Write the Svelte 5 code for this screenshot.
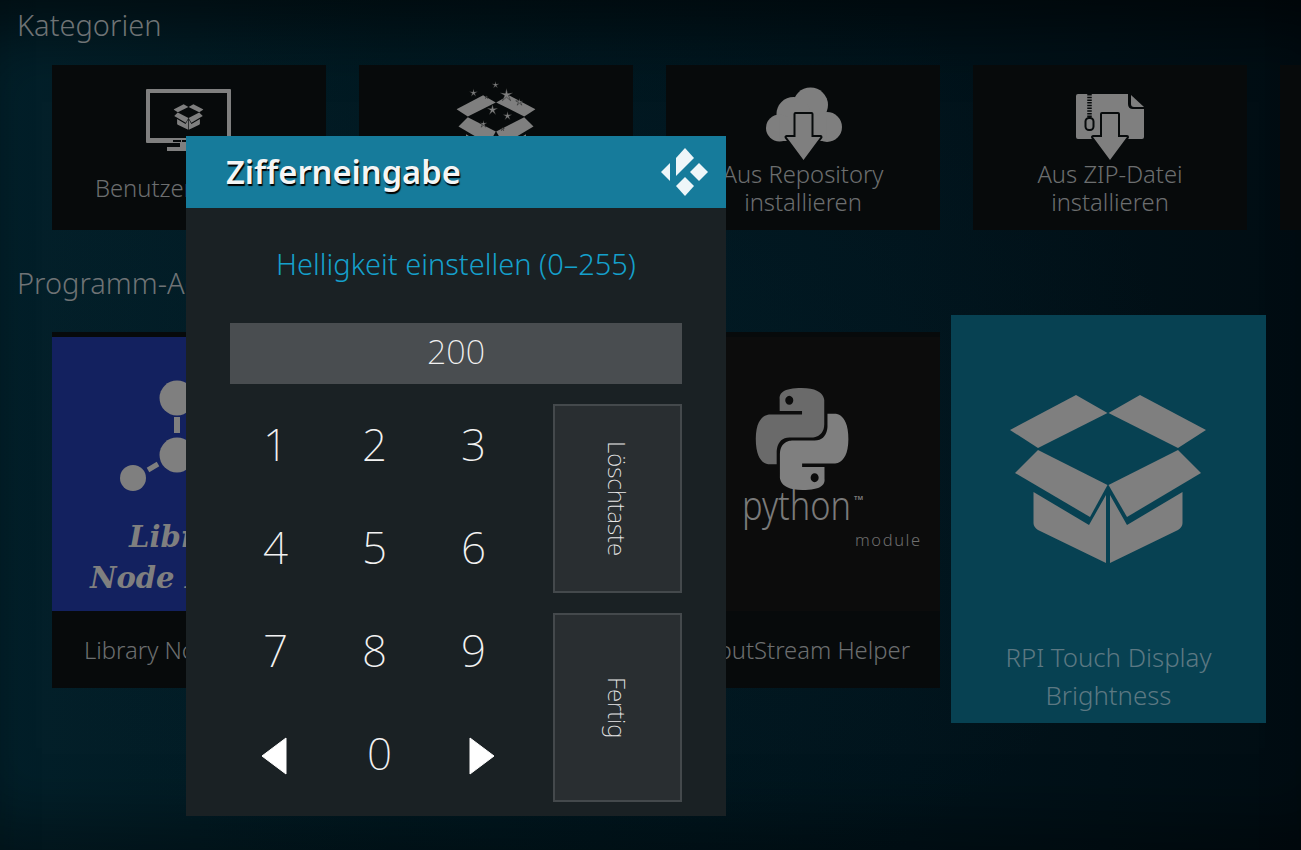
<script lang="ts">
  const keys = ["1", "2", "3", "4", "5", "6", "7", "8", "9"];
  const stars = [
    [27.5, -3, 4.5], [49.5, -11, 4], [60.5, -1, 7], [73.5, 6, 4], [40.5, 1, 1.8],
    [46.5, 14, 6], [61.5, 20, 5], [37.5, 28, 4], [56.5, 33, 2],
  ];
  const starPoints = (cx: number, cy: number, r: number) => {
    const pts = [];
    for (let i = 0; i < 10; i++) {
      const a = (Math.PI / 5) * i - Math.PI / 2;
      const d = i % 2 ? r * 0.3 : r;
      pts.push(`${(cx + d * Math.cos(a)).toFixed(1)},${(cy + d * Math.sin(a)).toFixed(1)}`);
    }
    return pts.join(" ");
  };
</script>

<svg class="defs" aria-hidden="true">
  <symbol id="box" viewBox="0 0 196 168">
    <path d="M66 0 97.5 18 28 53 0 35Z" />
    <path d="M130 0 196 35 168 53 98.5 18Z" />
    <path d="M28 55 97.5 90 80 122 5 78Z" />
    <path d="M168 55 191 78 117 122 98.5 90Z" />
    <path d="M23.5 97 79 130 96 100V168L28 135Q23.5 132 23.5 128Z" />
    <path d="M172.5 97 117 130 100 100V168L168 135Q172.5 132 172.5 128Z" />
  </symbol>
  <symbol id="arrow" viewBox="0 0 100 76">
    <path d="M42.5 27H58.5V50H67.5L50.5 73 33.5 50H42.5Z" stroke="#070a0b" stroke-width="4" stroke-linejoin="round" paint-order="stroke" />
  </symbol>
</svg>

<main class="home">
  <h2>Kategorien</h2>
  <section class="row">
    <article class="card small">
      <svg class="icon" viewBox="0 0 100 76">
        <path fill-rule="evenodd" d="M8 2H91Q92 2 92 3V55Q92 56 91 56H8Q7 56 7 55V3Q7 2 8 2ZM11 6V51H88V6Z" />
        <path class="slit" d="M34 53H42V55H34ZM43 53H47V55H43Z" />
        <path d="M41 56H60V60H41ZM28 60H72V64H28Z" />
        <use href="#box" x="34.5" y="17" width="30" height="26" />
      </svg>
      <div class="label">Benutzer-Addons</div>
    </article>

    <article class="card small">
      <svg class="icon" viewBox="0 0 100 76" overflow="visible">
        <use href="#box" x="10.5" y="8" width="79" height="68" />
        {#each stars as s}
          <polygon class="star" points={starPoints(s[0], s[1] + 9, s[2])} />
        {/each}
      </svg>
      <div class="label">Alle Repositories</div>
    </article>

    <article class="card small">
      <svg class="icon" viewBox="0 0 100 76">
        <circle cx="57.5" cy="18" r="17.5" />
        <circle cx="40.5" cy="27" r="17" />
        <circle cx="26.5" cy="41" r="13.5" />
        <circle cx="74" cy="40" r="15" />
        <rect x="26.5" y="30" width="47" height="24" />
        <use href="#arrow" width="100" height="76" />
      </svg>
      <div class="label">Aus Repository<br />installieren</div>
    </article>

    <article class="card small">
      <svg class="icon" viewBox="0 0 100 76">
        <path d="M18 7H68V17Q68 22 73 22H84V50Q84 52 82 52H18Q16 52 16 50V9Q16 7 18 7Z" />
        <path d="M71 8 84 20H74Q71 20 71 17Z" />
        <path class="zip" d="M29.5 7V30" />
        <rect class="zip-pull" x="25.5" y="31" width="8" height="12" rx="3.5" />
        <g transform="translate(-0.5 0)"><use href="#arrow" width="100" height="76" /></g>
      </svg>
      <div class="label">Aus ZIP-Datei<br />installieren</div>
    </article>

    <article class="card small"></article>
  </section>

  <h2 class="second">Programm-Add-ons</h2>
  <section class="row lower">
    <article class="card tall">
      <div class="thumb library">
        <svg viewBox="0 0 274 274">
          <circle cx="125" cy="61" r="17.5" />
          <rect x="122" y="80" width="6" height="16" />
          <circle cx="125" cy="118" r="17.5" />
          <path d="M96 133 106 127" stroke="#7f7f7f" stroke-width="5" />
          <circle cx="81" cy="141" r="13" />
          <text x="136" y="210">Library</text>
          <text x="136" y="251">Node Editor</text>
        </svg>
      </div>
      <div class="caption">Library Node Editor</div>
    </article>

    <article class="card tall">
      <div class="thumb"></div>
      <div class="caption">Kodi Add-on</div>
    </article>

    <article class="card tall">
      <div class="thumb python">
        <svg viewBox="0 0 274 274">
          <g transform="translate(90 51) scale(3.83 4.25)">
            <path fill-rule="evenodd" d="M14.25.18l.9.2.73.26.59.3.45.32.34.34.25.34.16.33.1.3.04.26.02.2-.01.13V8.5l-.05.63-.13.55-.21.46-.26.38-.3.31-.33.25-.35.19-.35.14-.33.1-.3.07-.26.04-.21.02H8.77l-.69.05-.59.14-.5.22-.41.27-.33.32-.27.35-.2.36-.15.37-.1.35-.07.32-.04.27-.02.21v3.06H3.17l-.21-.03-.28-.07-.32-.12-.35-.18-.36-.26-.36-.36-.35-.46-.32-.59-.28-.73-.21-.88-.14-1.05-.05-1.23.06-1.22.16-1.04.24-.87.32-.71.36-.57.4-.44.42-.33.42-.24.4-.16.36-.1.32-.05.24-.01h.16l.06.01h8.16v-.83H6.18l-.01-2.75-.02-.37.05-.34.11-.31.17-.28.25-.26.31-.23.38-.2.44-.18.51-.15.58-.12.64-.1.71-.06.77-.04.84-.02 1.27.05zm-6.3 1.98l-.23.33-.08.41.08.41.23.34.33.22.41.09.41-.09.33-.22.23-.34.08-.41-.08-.41-.23-.33-.33-.22-.41-.09-.41.09z" fill="#6a6a6a" />
            <path fill-rule="evenodd" d="M21.1 6.11l.28.06.32.12.35.18.36.27.36.35.35.47.32.59.28.73.21.88.14 1.04.05 1.23-.06 1.23-.16 1.04-.24.86-.32.71-.36.57-.4.45-.42.33-.42.24-.4.16-.36.09-.32.05-.24.02-.16-.01h-8.22v.82h5.84l.01 2.76.02.36-.05.34-.11.31-.17.29-.25.25-.31.24-.38.2-.44.17-.51.15-.58.13-.64.09-.71.07-.77.04-.84.01-1.27-.04-1.07-.14-.9-.2-.73-.25-.59-.3-.45-.33-.34-.34-.25-.34-.16-.33-.1-.3-.04-.25-.02-.2.01-.13v-5.34l.05-.64.13-.54.21-.46.26-.38.3-.32.33-.24.35-.2.35-.14.33-.1.3-.06.26-.04.21-.02.13-.01h5.84l.69-.05.59-.14.5-.21.41-.28.33-.32.27-.35.2-.36.15-.36.1-.35.07-.32.04-.28.02-.21V6.07h2.09l.14.01zm-6.53 14.25l-.23.33-.08.41.08.41.23.33.33.23.41.08.41-.08.33-.23.23-.33.08-.41-.08-.41-.23-.33-.33-.23-.41-.08-.41.08z" fill="#7f7f7f" />
          </g>
          <text class="py" x="76" y="183" textLength="109" lengthAdjust="spacingAndGlyphs">python</text>
          <text class="tm" x="188" y="163">TM</text>
          <text class="mod" x="189" y="209">module</text>
        </svg>
      </div>
      <div class="caption">InputStream Helper</div>
    </article>

    <article class="focused">
      <svg class="box-big" width="196" height="168"><use href="#box" width="196" height="168" /></svg>
      <div class="focused-label">RPI Touch Display<br />Brightness</div>
    </article>
  </section>
</main>

<div class="dialog" role="dialog" aria-label="Zifferneingabe">
  <header>
    <h1>Zifferneingabe</h1>
    <svg class="kodi" viewBox="0 0 48 48" aria-hidden="true">
      <path d="M1 24 10 15V33Z" />
      <path d="M25 0 34 10 16 28V10Z" />
      <path d="M39 15 48 24 39 33 30 24Z" />
      <path d="M25 29 34 38 25 48 16 38Z" />
    </svg>
  </header>
  <p class="prompt">Helligkeit einstellen (0–255)</p>
  <div class="input">200</div>
  <div class="pad">
    <div class="keys">
      {#each keys as k}
        <span class="key">{k}</span>
      {/each}
      <span class="key left">
        <svg class="nav" viewBox="0 0 26 38"><path d="M25 1V37L1 19Z" stroke="#fff" stroke-width="1" stroke-linejoin="round" /></svg>
      </span>
      <span class="key zero">0</span>
      <span class="key right">
        <svg class="nav" viewBox="0 0 26 38"><path d="M1 1V37L25 19Z" stroke="#fff" stroke-width="1" stroke-linejoin="round" /></svg>
      </span>
    </div>
    <div class="actions">
      <div class="action"><span>Löschtaste</span></div>
      <div class="action"><span>Fertig</span></div>
    </div>
  </div>
</div>

<style>
  :global(body) {
    margin: 0;
    background: #01121a;
  }

  .defs {
    position: absolute;
    width: 0;
    height: 0;
  }

  .home {
    width: 1301px;
    height: 850px;
    overflow: hidden;
    box-sizing: border-box;
    font-family: "Noto Sans", "Open Sans", sans-serif;
    background:
      radial-gradient(ellipse 620px 500px at 560px 430px, rgba(2, 32, 44, 0.55), rgba(2, 32, 44, 0) 100%),
      linear-gradient(90deg, #03202a 0%, #011820 30%, #01131b 70%, #010d13 100%);
    background-color: #01121a;
    box-shadow: inset 0 60px 60px -30px rgba(0, 0, 0, 0.55), inset 0 -60px 60px -30px rgba(0, 0, 0, 0.35);
  }

  h2 {
    margin: 0 0 15px;
    padding-left: 17px;
    height: 50px;
    line-height: 50px;
    color: #6f7375;
    font-size: 29px;
    font-weight: 300;
  }

  h2.second {
    margin: 28px 0 24px;
  }

  .row {
    display: flex;
    gap: 33px;
    padding-left: 52px;
    width: 1700px;
    align-items: flex-start;
  }

  .card {
    flex: 0 0 274px;
    background: #070a0b;
    color: #6c6e6f;
    font-size: 23.8px;
    font-weight: 300;
    text-align: center;
  }

  .small {
    height: 165px;
    padding-top: 22px;
    box-sizing: border-box;
  }

  .icon {
    display: block;
    width: 100px;
    height: 76px;
    margin: 0 auto;
    fill: #7f7f7f;
  }

  .slit {
    fill: #070a0b;
  }

  .star {
    fill: #7f7f7f;
    stroke: #070a0b;
    stroke-width: 0.4;
  }

  .zip {
    fill: none;
    stroke: #070a0b;
    stroke-width: 4.5;
    stroke-dasharray: 1.5 1.2;
  }

  .zip-pull {
    fill: #7f7f7f;
    stroke: #070a0b;
    stroke-width: 2;
  }

  .label {
    height: 56px;
    margin-top: -3px;
    line-height: 28px;
    display: flex;
    align-items: center;
    justify-content: center;
  }

  .tall {
    height: 356px;
    padding-top: 5px;
    box-sizing: border-box;
  }

  .thumb {
    height: 274px;
    background: #0c0c0c;
  }

  .thumb svg {
    display: block;
    width: 274px;
    height: 274px;
  }

  .library {
    background: #13215f;
  }

  .library svg {
    fill: #7f7f7f;
    font-family: "DejaVu Serif", serif;
    font-size: 29px;
    font-weight: 700;
    font-style: italic;
    text-anchor: middle;
  }

  .python svg text {
    fill: #7a7a7a;
  }

  .py {
    font-size: 41px;
    font-weight: 300;
  }

  .tm {
    font-size: 6px;
    font-weight: 700;
  }

  .python svg .mod {
    fill: #6e6e6e;
    font-size: 16.5px;
    font-weight: 300;
    letter-spacing: 1.6px;
  }

  .caption {
    height: 77px;
    padding-top: 1px;
    box-sizing: border-box;
    line-height: 76px;
    white-space: nowrap;
  }

  .focused {
    flex: 0 0 315px;
    height: 408px;
    margin: -17px -19px 0 -22px;
    padding-top: 80px;
    box-sizing: border-box;
    background: #074152;
    text-align: center;
    fill: #7f7f7f;
  }

  .box-big {
    display: block;
    margin: 0 auto;
    transform: translateX(-1px);
  }

  .focused-label {
    margin-top: 75px;
    color: #5c7882;
    font-size: 25.8px;
    font-weight: 300;
    line-height: 38px;
  }

  .dialog {
    position: absolute;
    left: 186px;
    top: 136px;
    width: 540px;
    height: 680px;
    background: #1a2124;
    color: #fff;
    font-family: "Noto Sans", "Open Sans", sans-serif;
  }

  header {
    display: flex;
    align-items: center;
    justify-content: space-between;
    height: 72px;
    padding: 0 18px 0 40px;
    background: #167b9b;
  }

  h1 {
    margin: 0 0 2px;
    color: #f4f5f5;
    font-size: 32.7px;
    font-weight: 600;
    text-shadow: 1px 2px 1px #000;
  }

  .kodi {
    width: 48px;
    height: 48px;
    fill: #eef6f9;
  }

  .prompt {
    margin: 0;
    height: 115px;
    line-height: 112px;
    text-align: center;
    color: #15a0cc;
    font-size: 29px;
    font-weight: 300;
  }

  .input {
    margin: 0 44px;
    height: 61px;
    line-height: 56px;
    text-align: center;
    background: #494d50;
    color: #f2f2f2;
    font-size: 34px;
    font-weight: 250;
  }

  .pad {
    display: flex;
    margin-top: 10px;
    padding-left: 40px;
  }

  .keys {
    display: grid;
    grid-template-columns: repeat(3, 99px);
    grid-auto-rows: 103px;
    margin-right: 30px;
  }

  .key {
    display: flex;
    align-items: center;
    justify-content: center;
    padding-bottom: 4px;
    box-sizing: border-box;
    color: #f2f2f2;
    font-size: 44px;
    font-weight: 250;
  }

  .zero {
    padding-left: 10px;
  }

  .left {
    padding: 2px 4px 0 0;
  }

  .right {
    padding: 2px 0 0 16px;
  }

  .nav {
    width: 26px;
    height: 38px;
    fill: #fff;
  }

  .actions {
    display: flex;
    flex-direction: column;
    gap: 20px;
    padding-top: 10px;
  }

  .action {
    box-sizing: border-box;
    width: 129px;
    height: 189px;
    display: flex;
    align-items: center;
    justify-content: center;
    background: #292e31;
    border: 2px solid #44494c;
  }

  .action span {
    writing-mode: vertical-rl;
    color: #e8e8e8;
    font-size: 24px;
    font-weight: 250;
  }
</style>
